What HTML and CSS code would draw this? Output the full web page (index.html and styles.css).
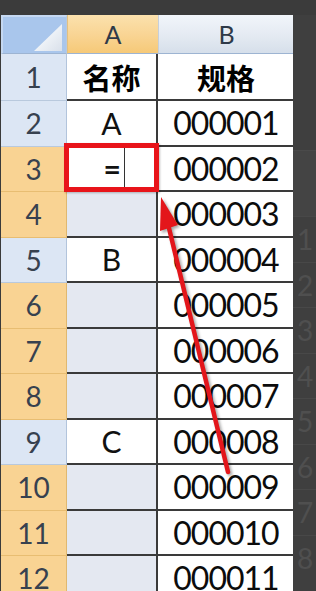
FILE: index.html
```html
<!DOCTYPE html>
<html lang="zh">
<head>
<meta charset="utf-8">
<title>Excel</title>
<link rel="stylesheet" href="styles.css">
</head>
<body>
<div class="screen">
  <div class="topbar"></div>
  <div class="main">
    <div class="sheet">
      <div class="corner"><span class="corner-tri"></span></div>
      <div class="colhead colhead-sel">A</div>
      <div class="colhead">B</div>

      <div class="rowhead">1</div>
      <div class="cell cell-a cjk">名称</div>
      <div class="cell cell-b cjk">规格</div>

      <div class="rowhead">2</div>
      <div class="cell cell-a">A</div>
      <div class="cell cell-b num">000001</div>

      <div class="rowhead rowhead-sel">3</div>
      <div class="cell cell-a cell-active">
        <span class="eq">=</span><span class="caret"></span>
        <span class="redbox"></span>
      </div>
      <div class="cell cell-b num">000002</div>

      <div class="rowhead rowhead-sel">4</div>
      <div class="cell cell-a cell-sel"></div>
      <div class="cell cell-b num">000003</div>

      <div class="rowhead">5</div>
      <div class="cell cell-a">B</div>
      <div class="cell cell-b num">000004</div>

      <div class="rowhead rowhead-sel">6</div>
      <div class="cell cell-a cell-sel"></div>
      <div class="cell cell-b num">000005</div>

      <div class="rowhead rowhead-sel">7</div>
      <div class="cell cell-a cell-sel"></div>
      <div class="cell cell-b num">000006</div>

      <div class="rowhead rowhead-sel">8</div>
      <div class="cell cell-a cell-sel"></div>
      <div class="cell cell-b num">000007</div>

      <div class="rowhead">9</div>
      <div class="cell cell-a">C</div>
      <div class="cell cell-b num">000008</div>

      <div class="rowhead rowhead-sel">10</div>
      <div class="cell cell-a cell-sel"></div>
      <div class="cell cell-b num">000009</div>

      <div class="rowhead rowhead-sel">11</div>
      <div class="cell cell-a cell-sel"></div>
      <div class="cell cell-b num">000010</div>

      <div class="rowhead rowhead-sel">12</div>
      <div class="cell cell-a cell-sel"></div>
      <div class="cell cell-b num">000011</div>
    </div>
    <div class="ghost">
      <div class="ghost-top"></div>
      <div class="ghost-band"></div>
      <div class="ghost-row">1</div>
      <div class="ghost-row">2</div>
      <div class="ghost-row">3</div>
      <div class="ghost-row">4</div>
      <div class="ghost-row">5</div>
      <div class="ghost-row">6</div>
      <div class="ghost-row">7</div>
      <div class="ghost-row">8</div>
    </div>
  </div>
  <svg class="arrow" width="316" height="591" viewBox="0 0 316 591">
    <line x1="228" y1="472" x2="168" y2="224" stroke="#e3161b" stroke-width="4.5" stroke-linecap="round"/>
    <polygon points="161,197 178,225 160,231" fill="#e3161b"/>
  </svg>
</div>
</body>
</html>
```

FILE: styles.css
```css
* { box-sizing: border-box; }
html, body { margin: 0; padding: 0; }
body {
  background: #3c3c3c;
  font-family: Lato, "Open Sans", "Noto Sans CJK SC", sans-serif;
}
.screen {
  position: relative;
  width: 316px;
  height: 591px;
  overflow: hidden;
  background: #3d3d3d;
}
.topbar {
  height: 15px;
  background: #3b3b3b;
}
.main {
  display: flex;
}
.sheet {
  display: grid;
  grid-template-columns: 66px 91px 136px;
  grid-template-rows: 39px 47px repeat(11, 45.5px);
  width: 293px;
  background: #fff;
  border-left: 1px solid #3a3a3a;
  flex: none;
}
.corner {
  position: relative;
  background: #a9c6ec;
  border: 2px solid #c5d8f1;
  border-right: 1px solid #b7c9e0;
  border-bottom: 1px solid #9db4d2;
}
.corner-tri {
  position: absolute;
  right: 4px;
  bottom: 2px;
  width: 28px;
  height: 27px;
  background: linear-gradient(135deg, #ffffff 0%, #eef2f7 50%, #d9e0ea 100%);
  clip-path: polygon(100% 0, 100% 100%, 0 100%);
}
.colhead {
  display: flex;
  align-items: center;
  justify-content: center;
  font-size: 25px;
  color: #2f3a48;
  background: linear-gradient(#f1f5fa 0%, #e4eaf2 55%, #d6dfea 100%);
  border-bottom: 1px solid #9db4d2;
  border-left: 1px solid #c6cfdb;
}
.colhead-sel {
  background: linear-gradient(#fbe1ad 0%, #f9d595 50%, #f6c978 100%);
  border-left: 1px solid #e2c080;
}
.rowhead {
  display: flex;
  align-items: center;
  justify-content: center;
  font-size: 28px;
  color: #37414f;
  background: #dce6f4;
  border-right: 1px solid #b2c4dc;
  border-bottom: 1px solid #b9c9dd;
}
.rowhead-sel {
  background: #f9d393;
  border-bottom-color: #e8bd72;
  border-right-color: #e0b870;
}
.cell {
  display: flex;
  align-items: center;
  justify-content: center;
  font-size: 30px;
  color: #111;
  background: #fff;
  border-bottom: 2px solid #3a3a3a;
}
.cell-a {
  border-right: 2px solid #3a3a3a;
}
.cell-sel {
  background: #e4e8f1;
}
.cjk {
  font-family: "Noto Sans CJK SC", sans-serif;
  font-weight: 700;
  font-size: 29px;
  color: #000;
}
.num {
  font-size: 32px;
  letter-spacing: -1px;
  color: #0c0c0c;
}
.cell-active {
  position: relative;
  justify-content: flex-end;
  align-items: stretch;
  padding-right: 31px;
}
.eq {
  align-self: center;
  font-weight: 700;
  font-size: 30px;
  margin-right: 3px;
}
.caret {
  width: 1px;
  background: #333;
}
.redbox {
  position: absolute;
  left: -3px;
  right: -3px;
  top: -4px;
  bottom: -2px;
  border: 5px solid #e8141a;
  box-shadow: 1px 1px 2px rgba(0,0,0,0.25);
}
.ghost {
  flex: 1;
  display: flex;
  flex-direction: column;
  background: #3f3f3f;
}
.ghost-top {
  height: 135px;
}
.ghost-band {
  height: 66px;
  background: #444;
  border-top: 1px solid #4a4a4a;
}
.ghost-row {
  height: 45.5px;
  flex: none;
  display: flex;
  align-items: center;
  padding-left: 4px;
  font-size: 28px;
  color: #4f4f4f;
  border-top: 1px solid #484848;
}
.arrow {
  position: absolute;
  left: 0;
  top: 0;
  pointer-events: none;
  filter: drop-shadow(2px 2px 1.5px rgba(0,0,0,0.35));
}
```
